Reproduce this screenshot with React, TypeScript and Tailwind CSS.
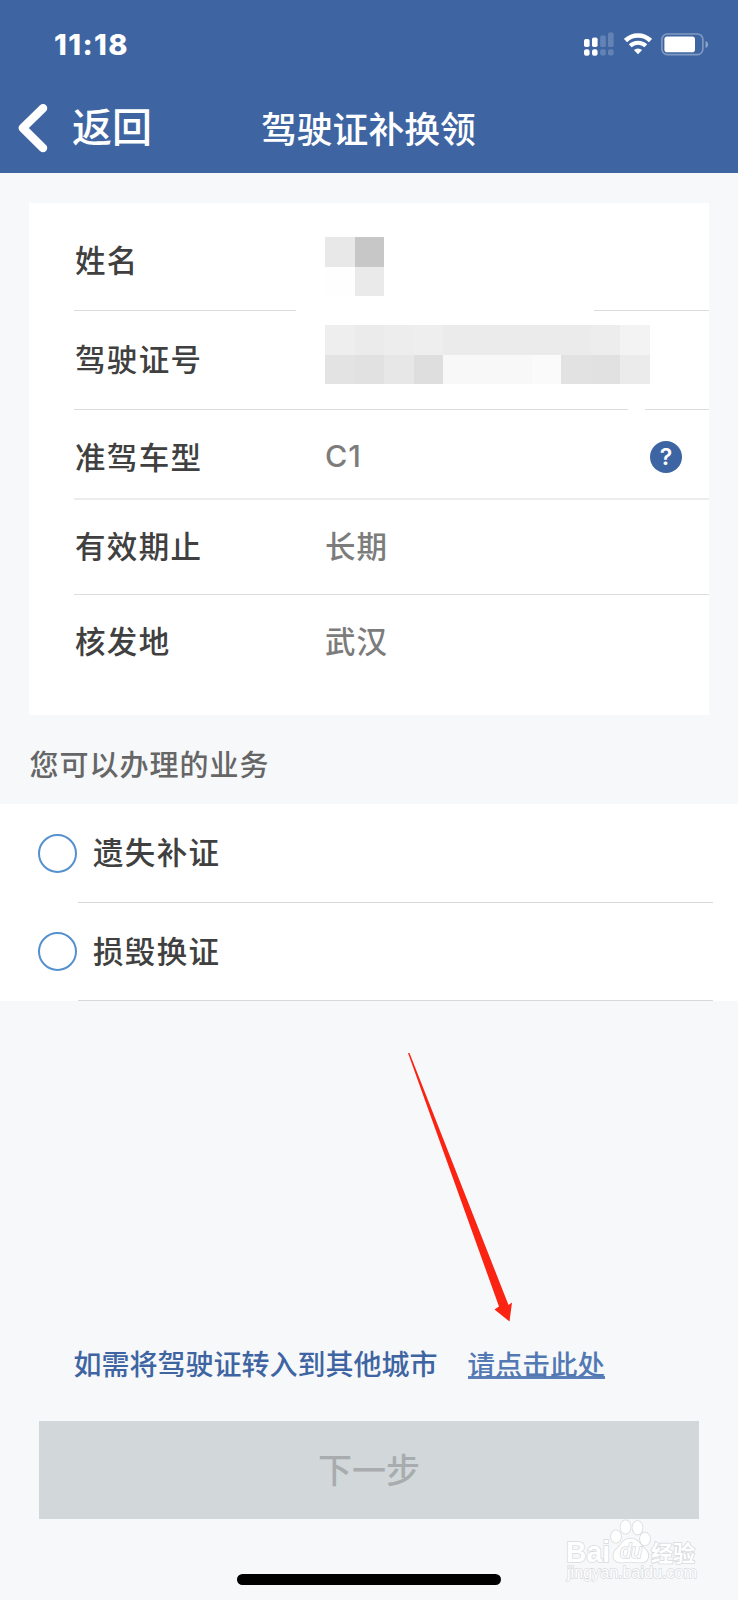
import { useState } from 'react'

const FONT = "font-['Inter','Noto_Sans_CJK_SC',sans-serif]"

// Masked values: rows of grey blocks, left to right
const NAME_MASK = [
  ['bg-[#e8e8e8]', 'bg-[#c7c7c7]'],
  ['bg-[#fefefe]', 'bg-[#eaeaea]'],
]

const NUMBER_MASK = [
  ['bg-[#eeeeee]', 'bg-[#ebebeb]', 'bg-[#ededed]', 'bg-[#eeeeee]', 'bg-[#ebebeb]', 'bg-[#ebebeb]', 'bg-[#ebebeb]', 'bg-[#ebebeb]', 'bg-[#ebebeb]', 'bg-[#ededed]', 'bg-[#f3f3f3]'],
  ['bg-[#e3e3e3]', 'bg-[#e1e1e1]', 'bg-[#e7e7e7]', 'bg-[#dedede]', 'bg-[#f8f8f8]', 'bg-[#f8f8f8]', 'bg-[#f8f8f8]', 'bg-[#fafafa]', 'bg-[#e2e2e2]', 'bg-[#e1e1e1]', 'bg-[#ebebeb]'],
]

const SERVICES = ['遗失补证', '损毁换证']

function Mosaic({ rows }: { rows: string[][] }) {
  return (
    <div>
      {rows.map((row, i) => (
        <div key={i} className="flex">
          {row.map((color, j) => (
            <span key={j} className={`h-[29.5px] w-[29.550px] ${color}`} />
          ))}
        </div>
      ))}
    </div>
  )
}

function StatusBar() {
  return (
    <div className="flex h-[88px] items-center justify-between pl-[54px] pr-[29px]">
      <span className="text-[29px] font-extrabold leading-none tracking-[1.400px]">11:18</span>
      <div className="flex items-center">
        <svg width="31" height="25" viewBox="0 0 31 25" fill="#fff">
          <rect x="0" y="7" width="5.6" height="8" rx="1.8" />
          <rect x="8" y="5.5" width="5.6" height="9.5" rx="1.8" />
          <rect x="16.2" y="3.5" width="5.6" height="11.5" rx="1.5" opacity="0.2" />
          <rect x="24" y="0.5" width="5.6" height="14.5" rx="1.5" opacity="0.2" />
          <rect x="0" y="17.2" width="5.6" height="6.6" rx="2.2" />
          <rect x="8" y="17.2" width="5.6" height="6.6" rx="2.2" />
          <rect x="16.2" y="17.2" width="5.6" height="6.4" rx="2" opacity="0.2" />
          <rect x="24" y="17.2" width="5.6" height="6.4" rx="2" opacity="0.2" />
        </svg>
        <svg className="ml-[9px]" width="28" height="22" viewBox="0 0 28 22" fill="none" stroke="#fff">
          <path d="M1.500 7.500a18 18 0 0 1 25 0" strokeWidth="4.600" />
          <path d="M6.200 12.800a11.200 11.200 0 0 1 15.600 0" strokeWidth="4" />
          <path d="M14 21.200l-4.100-4.200a6 6 0 0 1 8.200 0z" fill="#fff" stroke="none" />
        </svg>
        <svg className="ml-[9px]" width="48" height="23" viewBox="0 0 48 23">
          <rect x="0.9" y="1" width="41" height="20.6" rx="5.5" fill="none" stroke="#fff" strokeWidth="1.6" opacity="0.35" />
          <rect x="3.4" y="3.6" width="30.6" height="15.600" rx="2.800" fill="#fff" />
          <path d="M44.500 8v7c1.600-.5 2.600-1.900 2.600-3.500S46.100 8.500 44.500 8z" fill="#fff" opacity="0.400" />
        </svg>
      </div>
    </div>
  )
}

function NavBar() {
  return (
    <div className="grid h-[85px] grid-cols-[261px_1fr] items-center pb-[6px]">
      <button className="flex items-center pl-[16px] text-left">
        <svg width="32" height="52" viewBox="0 0 32 52" fill="none" stroke="#fff" strokeWidth="8.500" strokeLinecap="round" strokeLinejoin="round">
          <path d="M27 6.200L6.800 26 27 46" />
        </svg>
        <span className="ml-[24px] text-[40px] font-medium leading-none">返回</span>
      </button>
      <h1 className="whitespace-nowrap pt-[6px] text-[35.800px] font-medium leading-none">驾驶证补换领</h1>
    </div>
  )
}

function Label({ children }: { children: string }) {
  return <span className="w-[250px] shrink-0 text-[30.500px] font-medium leading-none tracking-[1.350px] text-[#404040]">{children}</span>
}

function Value({ children }: { children: string }) {
  return <span className="text-[30.500px] font-medium leading-none tracking-[1px] text-[#7c7c7c]">{children}</span>
}

function LicenseCard() {
  return (
    <section className="mx-[29px] mt-[30px] h-[512px] bg-white pl-[45px]">
      <div className="flex h-[107px] items-center pl-px pt-[10px]">
        <Label>姓名</Label>
        <div className="pt-[10px]"><Mosaic rows={NAME_MASK} /></div>
      </div>
      {/* divider is broken where the mask smears over it */}
      <div className="flex h-px justify-between">
        <span className="w-[222px] bg-[#dcdcdc]" />
        <span className="w-[115px] bg-[#dcdcdc]" />
      </div>
      <div className="flex h-[98px] items-center pl-px">
        <Label>驾驶证号</Label>
        <div className="pb-[11px]"><Mosaic rows={NUMBER_MASK} /></div>
      </div>
      <div className="flex h-px justify-between">
        <span className="w-[554px] bg-[#dcdcdc]" />
        <span className="w-[64px] bg-[#dcdcdc]" />
      </div>
      <div className="flex h-[90px] items-center border-b-2 border-[#ececec] pl-px pr-[27px] pt-[8px]">
        <Label>准驾车型</Label>
        <span className="mb-[3px]"><Value>C1</Value></span>
        <span className="mb-[2px] ml-auto flex h-8 w-8 items-center justify-center rounded-full bg-[#3e65a3] text-[23px] font-semibold leading-none text-white">
          ?
        </span>
      </div>
      <div className="flex h-[95px] items-center border-b border-[#dedede] pl-px">
        <Label>有效期止</Label>
        <Value>长期</Value>
      </div>
      <div className="flex h-[95px] items-center pl-px">
        <Label>核发地</Label>
        <Value>武汉</Value>
      </div>
    </section>
  )
}

// Pale watermark in the bottom right corner
function Watermark() {
  return (
    <svg
      className="absolute bottom-[14px] right-[34px] overflow-visible"
      width="140"
      height="70"
      viewBox="0 0 140 70"
      fill="#fff"
      stroke="#d9dbde"
      strokeWidth="1.600"
      paintOrder="stroke"
      fontFamily="'Liberation Sans', 'Noto Sans CJK SC', sans-serif"
    >
      <text x="2" y="45.500" fontSize="30" fontWeight="700" textLength="44" lengthAdjust="spacingAndGlyphs">Bai</text>
      <ellipse cx="52" cy="20.500" rx="5" ry="6.200" />
      <ellipse cx="61.500" cy="11" rx="5" ry="6.800" />
      <ellipse cx="73.500" cy="11.800" rx="5" ry="6.800" />
      <ellipse cx="81" cy="23" rx="5" ry="6.500" />
      <path d="M66.500 22.500c-7 0-9 6-13.500 10-5.500 5-5 13.500 3.500 14 4 .2 6-.8 10-.8s6.500 1 11 .8c8-.4 8.500-9 3.500-13.500-5-4.500-7-10.500-14.500-10.500z" />
      <text x="56" y="42" fontSize="20" fontStyle="italic">du</text>
      <text x="87" y="44.500" fontSize="22" fontWeight="700">经验</text>
      <text x="3" y="62" fontSize="16" strokeWidth="1.300" textLength="130" lengthAdjust="spacingAndGlyphs">jingyan.baidu.com</text>
    </svg>
  )
}

export default function App() {
  const [selected, setSelected] = useState<string | null>(null)

  return (
    <div className={`relative flex h-[1600px] w-[738px] flex-col overflow-hidden bg-[#f6f8fa] ${FONT}`}>
      <header className="h-[173px] shrink-0 bg-[#3e65a2] text-white">
        <StatusBar />
        <NavBar />
      </header>

      <LicenseCard />

      <h2 className="flex h-[89px] items-center pl-[29.500px] pt-[12px] text-[29px] font-medium leading-none tracking-[1px] text-[#666]">
        您可以办理的业务
      </h2>

      <ul className="h-[197px] bg-white">
        {SERVICES.map((name) => (
          <li key={name} className="h-[98.500px]">
            <button onClick={() => setSelected(name)} className="flex h-[97.500px] w-full items-center pl-[38px] pt-px">
              <span className={`h-[39px] w-[39px] rounded-full border-2 border-[#5590cf] ${selected === name ? 'bg-[#5590cf]' : 'bg-white'}`} />
              <span className="ml-[16px] text-[30.500px] font-medium leading-none tracking-[1.350px] text-[#404040]">{name}</span>
            </button>
            <div className="ml-[78px] mr-[25px] h-px bg-[#d8d8d8]" />
          </li>
        ))}
      </ul>

      <div className="mt-auto flex items-end pb-[42px] pl-[73.500px] text-[28px] font-medium leading-[28px] text-[#3e65a2]">
        <span className="whitespace-nowrap">如需将驾驶证转入到其他城市</span>
        <a href="#" className="ml-[30px] h-[28px] border-b-3 border-[#5b7fb6] text-[27.500px] text-[#5279b3]">请点击此处</a>
      </div>

      <button className="mx-[39px] mb-[55px] h-[98px] shrink-0 bg-[#d2d8da] pt-px text-[34px] font-medium leading-none text-[#a8acae]">下一步</button>
      <div className="mx-auto mb-[15px] h-[11px] w-[264px] shrink-0 rounded-full bg-black" />

      {/* Pointer to the transfer link */}
      <svg className="pointer-events-none absolute left-[400px] top-[1045px]" width="120" height="285" viewBox="0 0 120 285">
        <path d="M8 8L9.500 8L108.500 260L112 257.500L109.500 276.500L94.500 264.500L99 261.500Z" fill="#fb2312" />
      </svg>

      <Watermark />
    </div>
  )
}
